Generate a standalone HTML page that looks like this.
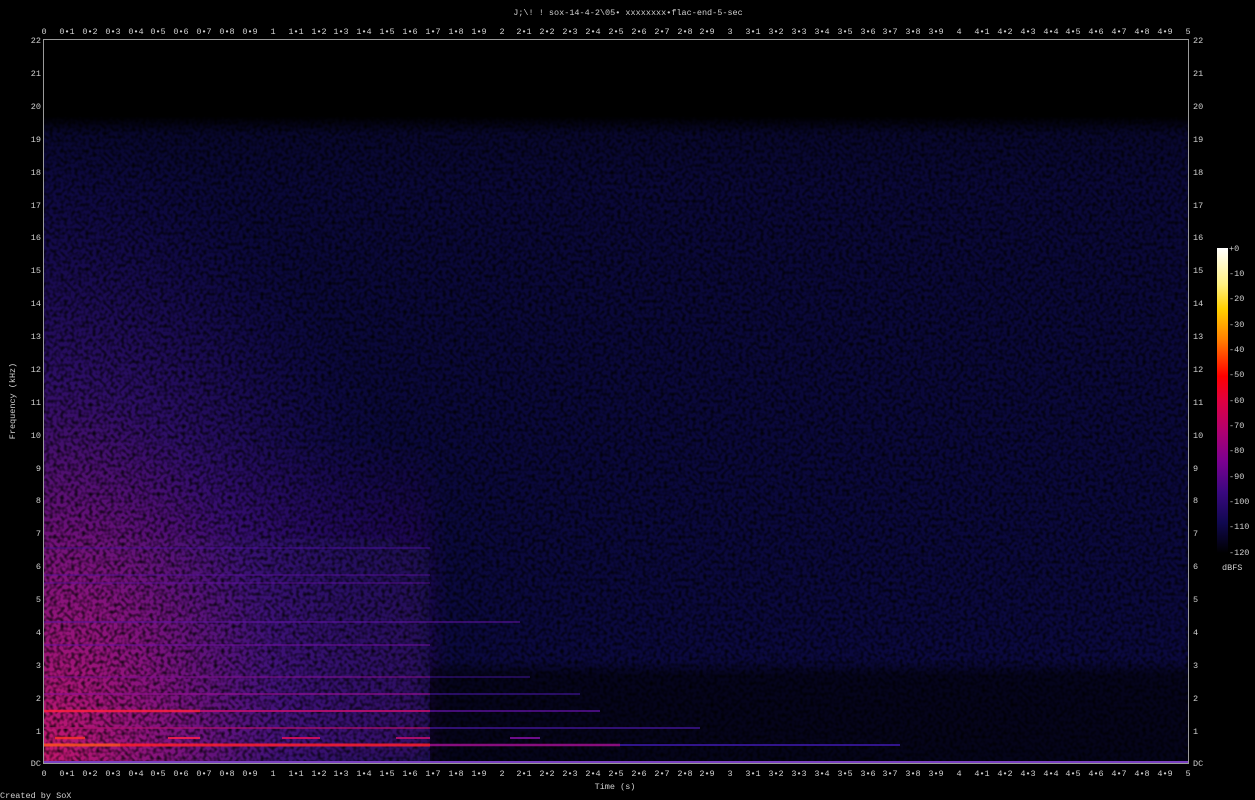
<!DOCTYPE html>
<html><head><meta charset="utf-8"><style>
html,body{margin:0;padding:0;background:#000;}
svg{display:block}
text{font-family:"Liberation Mono",monospace;font-size:8.5px;fill:#d0d0d0}
</style></head><body>
<svg width="1255" height="800" viewBox="0 0 1255 800" xmlns="http://www.w3.org/2000/svg">
<defs>
<clipPath id="pc"><rect x="44" y="40" width="1144" height="723"/></clipPath>
<linearGradient id="base" x1="0" y1="0" x2="0" y2="1">
<stop offset="0" stop-color="#000"/>
<stop offset="0.105" stop-color="#000"/>
<stop offset="0.13" stop-color="#08072e"/>
<stop offset="0.2" stop-color="#0a0838"/>
<stop offset="1" stop-color="#0b0940"/>
</linearGradient>
<radialGradient id="glow" gradientUnits="userSpaceOnUse" cx="44" cy="763" r="400" gradientTransform="translate(44 763) scale(1 1.6) translate(-44 -763)">
<stop offset="0" stop-color="#d81870" stop-opacity="0.9"/>
<stop offset="0.3" stop-color="#a01488" stop-opacity="0.75"/>
<stop offset="0.6" stop-color="#501490" stop-opacity="0.5"/>
<stop offset="1" stop-color="#1a0c70" stop-opacity="0"/>
</radialGradient>
<linearGradient id="mid" x1="0" y1="0" x2="0" y2="1">
<stop offset="0" stop-color="#501488" stop-opacity="0"/>
<stop offset="0.4" stop-color="#501488" stop-opacity="0.35"/>
<stop offset="1" stop-color="#601488" stop-opacity="0.55"/>
</linearGradient>
<linearGradient id="dark" x1="0" y1="0" x2="0" y2="1">
<stop offset="0" stop-color="#000" stop-opacity="0"/>
<stop offset="0.15" stop-color="#000" stop-opacity="0.55"/>
<stop offset="1" stop-color="#000" stop-opacity="0.6"/>
</linearGradient>
<linearGradient id="cbar" x1="0" y1="0" x2="0" y2="1">
<stop offset="0" stop-color="#ffffff"/>
<stop offset="0.12" stop-color="#fff080"/>
<stop offset="0.2" stop-color="#ffd000"/>
<stop offset="0.3" stop-color="#ff8000"/>
<stop offset="0.42" stop-color="#ff0000"/>
<stop offset="0.5" stop-color="#e00040"/>
<stop offset="0.6" stop-color="#b00070"/>
<stop offset="0.7" stop-color="#7a0090"/>
<stop offset="0.8" stop-color="#3a0880"/>
<stop offset="0.9" stop-color="#100850"/>
<stop offset="1" stop-color="#000000"/>
</linearGradient>
<filter id="nz" x="0" y="0" width="100%" height="100%">
<feTurbulence type="fractalNoise" baseFrequency="0.28" numOctaves="1" seed="3"/>
<feColorMatrix type="matrix" values="0 0 0 0 0  0 0 0 0 0  0 0 0 0 0  0 0 0 -2.4 1.45"/>
</filter>
<filter id="bl"><feGaussianBlur stdDeviation="12"/></filter>
</defs>

<rect width="1255" height="800" fill="#000"/>

<g clip-path="url(#pc)">
<rect x="44" y="40" width="1144" height="723" fill="url(#base)"/>
<rect x="44" y="440" width="385" height="323" fill="url(#mid)" filter="url(#bl)"/>
<rect x="430" y="660" width="770" height="103" fill="url(#dark)"/>
<rect x="44" y="100" width="700" height="663" fill="url(#glow)"/>
<rect x="44" y="40" width="1144" height="723" filter="url(#nz)" opacity="0.8"/>
<g stroke-linecap="butt" opacity="0.85">
<line x1="44" y1="745" x2="430" y2="745" stroke="#ff1e30" stroke-width="3"/>
<line x1="44" y1="745" x2="120" y2="745" stroke="#ff5020" stroke-width="3"/>
<line x1="430" y1="745" x2="620" y2="745" stroke="#a01090" stroke-width="2.5"/>
<line x1="620" y1="745" x2="900" y2="745" stroke="#3a18a0" stroke-width="2"/>
<line x1="55" y1="738" x2="85" y2="738" stroke="#ff3030" stroke-width="2.5"/>
<line x1="168" y1="738" x2="200" y2="738" stroke="#ff2050" stroke-width="2"/>
<line x1="282" y1="738" x2="320" y2="738" stroke="#e01060" stroke-width="2"/>
<line x1="396" y1="738" x2="430" y2="738" stroke="#c01070" stroke-width="2"/>
<line x1="510" y1="738" x2="540" y2="738" stroke="#8010a0" stroke-width="2"/>
<line x1="44" y1="728" x2="430" y2="728" stroke="#b01070" stroke-width="1.5"/>
<line x1="430" y1="728" x2="700" y2="728" stroke="#4a18a8" stroke-width="1.5"/>
<line x1="44" y1="711" x2="200" y2="711" stroke="#ff2040" stroke-width="2.5"/>
<line x1="200" y1="711" x2="430" y2="711" stroke="#c01070" stroke-width="2"/>
<line x1="430" y1="711" x2="600" y2="711" stroke="#6a14b0" stroke-width="1.5"/>
<line x1="44" y1="694" x2="430" y2="694" stroke="#901090" stroke-width="1.5"/>
<line x1="430" y1="694" x2="580" y2="694" stroke="#4a18a8" stroke-width="1.2"/>
<line x1="44" y1="677" x2="430" y2="677" stroke="#801090" stroke-width="1.2"/>
<line x1="430" y1="677" x2="530" y2="677" stroke="#4a18a8" stroke-width="1"/>
<line x1="44" y1="645" x2="430" y2="645" stroke="#7010a0" stroke-width="1.2"/>
<line x1="44" y1="622" x2="520" y2="622" stroke="#6014a0" stroke-width="1.2"/>
<line x1="44" y1="583" x2="430" y2="583" stroke="#6010a0" stroke-width="1"/>
<line x1="44" y1="575" x2="430" y2="575" stroke="#5a10a0" stroke-width="1"/>
<line x1="44" y1="548" x2="430" y2="548" stroke="#5010a0" stroke-width="1"/>
</g>
<line x1="44" y1="762" x2="1188" y2="762" stroke="#7a40c0" stroke-width="2"/>
</g>

<g stroke="#9a9a9a" stroke-width="1" fill="none">
<rect x="43.5" y="39.5" width="1145" height="724"/>
</g>

<rect x="1217" y="248" width="11" height="305" fill="url(#cbar)"/>
<g>
<text x="1229" y="251">+0</text>
<text x="1229" y="276">-10</text>
<text x="1229" y="301">-20</text>
<text x="1229" y="327">-30</text>
<text x="1229" y="352">-40</text>
<text x="1229" y="377">-50</text>
<text x="1229" y="403">-60</text>
<text x="1229" y="428">-70</text>
<text x="1229" y="453">-80</text>
<text x="1229" y="479">-90</text>
<text x="1229" y="504">-100</text>
<text x="1229" y="529">-110</text>
<text x="1229" y="555">-120</text>
<text x="1222" y="570">dBFS</text>
</g>

<text x="628" y="15" text-anchor="middle">J;\! ! sox-14-4-2\05• xxxxxxxx•flac-end-5-sec</text>
<text x="615" y="789" text-anchor="middle">Time (s)</text>
<text x="0" y="798">Created by SoX</text>
<text transform="translate(15 401) rotate(-90)" text-anchor="middle">Frequency (kHz)</text>

<g text-anchor="end">
<text x="41" y="43">22</text><text x="41" y="76">21</text><text x="41" y="109">20</text><text x="41" y="142">19</text><text x="41" y="175">18</text><text x="41" y="208">17</text><text x="41" y="240">16</text><text x="41" y="273">15</text><text x="41" y="306">14</text><text x="41" y="339">13</text><text x="41" y="372">12</text><text x="41" y="405">11</text><text x="41" y="438">10</text><text x="41" y="471">9</text><text x="41" y="503">8</text><text x="41" y="536">7</text><text x="41" y="569">6</text><text x="41" y="602">5</text><text x="41" y="635">4</text><text x="41" y="668">3</text><text x="41" y="701">2</text><text x="41" y="734">1</text><text x="41" y="766">DC</text>
</g>
<g text-anchor="start">
<text x="1193" y="43">22</text><text x="1193" y="76">21</text><text x="1193" y="109">20</text><text x="1193" y="142">19</text><text x="1193" y="175">18</text><text x="1193" y="208">17</text><text x="1193" y="240">16</text><text x="1193" y="273">15</text><text x="1193" y="306">14</text><text x="1193" y="339">13</text><text x="1193" y="372">12</text><text x="1193" y="405">11</text><text x="1193" y="438">10</text><text x="1193" y="471">9</text><text x="1193" y="503">8</text><text x="1193" y="536">7</text><text x="1193" y="569">6</text><text x="1193" y="602">5</text><text x="1193" y="635">4</text><text x="1193" y="668">3</text><text x="1193" y="701">2</text><text x="1193" y="734">1</text><text x="1193" y="766">DC</text>
</g>

<g text-anchor="middle">
<text x="44" y="34">0</text><text x="67" y="34">0•1</text><text x="90" y="34">0•2</text><text x="113" y="34">0•3</text><text x="136" y="34">0•4</text><text x="158" y="34">0•5</text><text x="181" y="34">0•6</text><text x="204" y="34">0•7</text><text x="227" y="34">0•8</text><text x="250" y="34">0•9</text><text x="273" y="34">1</text><text x="296" y="34">1•1</text><text x="319" y="34">1•2</text><text x="341" y="34">1•3</text><text x="364" y="34">1•4</text><text x="387" y="34">1•5</text><text x="410" y="34">1•6</text><text x="433" y="34">1•7</text><text x="456" y="34">1•8</text><text x="479" y="34">1•9</text><text x="502" y="34">2</text><text x="524" y="34">2•1</text><text x="547" y="34">2•2</text><text x="570" y="34">2•3</text><text x="593" y="34">2•4</text><text x="616" y="34">2•5</text><text x="639" y="34">2•6</text><text x="662" y="34">2•7</text><text x="685" y="34">2•8</text><text x="707" y="34">2•9</text><text x="730" y="34">3</text><text x="753" y="34">3•1</text><text x="776" y="34">3•2</text><text x="799" y="34">3•3</text><text x="822" y="34">3•4</text><text x="845" y="34">3•5</text><text x="868" y="34">3•6</text><text x="890" y="34">3•7</text><text x="913" y="34">3•8</text><text x="936" y="34">3•9</text><text x="959" y="34">4</text><text x="982" y="34">4•1</text><text x="1005" y="34">4•2</text><text x="1028" y="34">4•3</text><text x="1051" y="34">4•4</text><text x="1073" y="34">4•5</text><text x="1096" y="34">4•6</text><text x="1119" y="34">4•7</text><text x="1142" y="34">4•8</text><text x="1165" y="34">4•9</text><text x="1188" y="34">5</text>
</g>
<g text-anchor="middle">
<text x="44" y="776">0</text><text x="67" y="776">0•1</text><text x="90" y="776">0•2</text><text x="113" y="776">0•3</text><text x="136" y="776">0•4</text><text x="158" y="776">0•5</text><text x="181" y="776">0•6</text><text x="204" y="776">0•7</text><text x="227" y="776">0•8</text><text x="250" y="776">0•9</text><text x="273" y="776">1</text><text x="296" y="776">1•1</text><text x="319" y="776">1•2</text><text x="341" y="776">1•3</text><text x="364" y="776">1•4</text><text x="387" y="776">1•5</text><text x="410" y="776">1•6</text><text x="433" y="776">1•7</text><text x="456" y="776">1•8</text><text x="479" y="776">1•9</text><text x="502" y="776">2</text><text x="524" y="776">2•1</text><text x="547" y="776">2•2</text><text x="570" y="776">2•3</text><text x="593" y="776">2•4</text><text x="616" y="776">2•5</text><text x="639" y="776">2•6</text><text x="662" y="776">2•7</text><text x="685" y="776">2•8</text><text x="707" y="776">2•9</text><text x="730" y="776">3</text><text x="753" y="776">3•1</text><text x="776" y="776">3•2</text><text x="799" y="776">3•3</text><text x="822" y="776">3•4</text><text x="845" y="776">3•5</text><text x="868" y="776">3•6</text><text x="890" y="776">3•7</text><text x="913" y="776">3•8</text><text x="936" y="776">3•9</text><text x="959" y="776">4</text><text x="982" y="776">4•1</text><text x="1005" y="776">4•2</text><text x="1028" y="776">4•3</text><text x="1051" y="776">4•4</text><text x="1073" y="776">4•5</text><text x="1096" y="776">4•6</text><text x="1119" y="776">4•7</text><text x="1142" y="776">4•8</text><text x="1165" y="776">4•9</text><text x="1188" y="776">5</text>
</g>
</svg>
</body></html>
